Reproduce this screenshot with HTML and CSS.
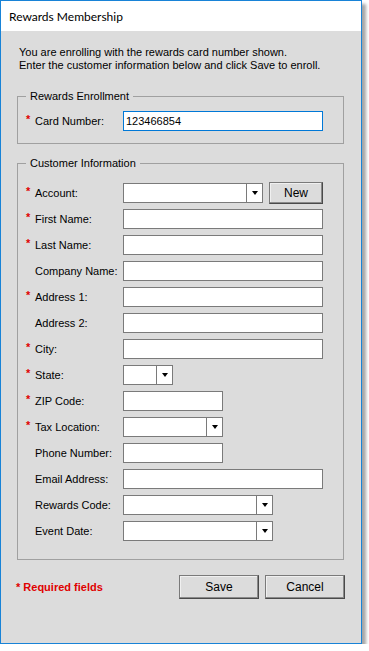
FILE: index.html
```html
<!DOCTYPE html>
<html lang="en">
<head>
  <meta charset="UTF-8">
  <title>Rewards Membership</title>
  <link rel="stylesheet" href="styles.css">
</head>
<body>

<div class="window">
  <div class="titlebar">Rewards Membership</div>
  <div class="content">
    <p class="intro">You are enrolling with the rewards card number shown.<br>Enter the customer information below and click Save to enroll.</p>

    <fieldset class="group group-card">
      <legend>Rewards Enrollment</legend>
      <div class="row">
        <span class="req">*</span><span class="label">Card Number:</span>
        <div class="field w200 focused">123466854</div>
      </div>
    </fieldset>

    <fieldset class="group group-customer">
      <legend>Customer Information</legend>
      <div class="row">
        <span class="req">*</span><span class="label">Account:</span>
        <div class="combo w140"><div class="combo-text"></div><div class="combo-btn"><i class="arrow"></i></div></div>
        <button class="btn btn-new">New</button>
      </div>
      <div class="row">
        <span class="req">*</span><span class="label">First Name:</span>
        <div class="field w200"></div>
      </div>
      <div class="row">
        <span class="req">*</span><span class="label">Last Name:</span>
        <div class="field w200"></div>
      </div>
      <div class="row">
        <span class="req"></span><span class="label">Company Name:</span>
        <div class="field w200"></div>
      </div>
      <div class="row">
        <span class="req">*</span><span class="label">Address 1:</span>
        <div class="field w200"></div>
      </div>
      <div class="row">
        <span class="req"></span><span class="label">Address 2:</span>
        <div class="field w200"></div>
      </div>
      <div class="row">
        <span class="req">*</span><span class="label">City:</span>
        <div class="field w200"></div>
      </div>
      <div class="row">
        <span class="req">*</span><span class="label">State:</span>
        <div class="combo w50"><div class="combo-text"></div><div class="combo-btn"><i class="arrow"></i></div></div>
      </div>
      <div class="row">
        <span class="req">*</span><span class="label">ZIP Code:</span>
        <div class="field w100"></div>
      </div>
      <div class="row">
        <span class="req">*</span><span class="label">Tax Location:</span>
        <div class="combo w100"><div class="combo-text"></div><div class="combo-btn"><i class="arrow"></i></div></div>
      </div>
      <div class="row">
        <span class="req"></span><span class="label">Phone Number:</span>
        <div class="field w100"></div>
      </div>
      <div class="row">
        <span class="req"></span><span class="label">Email Address:</span>
        <div class="field w200"></div>
      </div>
      <div class="row">
        <span class="req"></span><span class="label">Rewards Code:</span>
        <div class="combo w150"><div class="combo-text"></div><div class="combo-btn"><i class="arrow"></i></div></div>
      </div>
      <div class="row">
        <span class="req"></span><span class="label">Event Date:</span>
        <div class="combo w150"><div class="combo-text"></div><div class="combo-btn"><i class="arrow"></i></div></div>
      </div>
    </fieldset>

    <div class="footer">
      <span class="required-note">* Required fields</span>
      <button class="btn btn-footer">Save</button>
      <button class="btn btn-footer">Cancel</button>
    </div>
  </div>
</div>

</body>
</html>
```

FILE: styles.css
```css
body {
  margin: 0;
  background: #fff;
  font-family: "Liberation Sans", Arial, sans-serif;
  font-size: 11px;
  color: #000;
}
.window {
  width: 362px;
  height: 644px;
  box-sizing: border-box;
  border: 1px solid #1883d7;
  display: flex;
  flex-direction: column;
  box-shadow: 4px 4px 3px rgba(0, 0, 0, 0.35);
}
.titlebar {
  height: 30px;
  line-height: 31px;
  padding-left: 8px;
  background: #fff;
  font-family: Lato, "Noto Sans", sans-serif;
  font-size: 12px;
  color: #000;
}
.content {
  flex: 1;
  background: #dcdcdc;
  overflow: hidden;
}
.intro {
  margin: 15px 0 0 18px;
  line-height: 13px;
}
.group {
  box-sizing: border-box;
  width: 327px;
  margin: 0 0 0 16px;
  padding: 0;
  border: 1px solid #a0a0a0;
}
.group legend {
  margin-left: 8px;
  padding: 0 4px;
  line-height: 13px;
}
.group-card {
  margin-top: 18px;
  padding: 8px 0 12px;
}
.group-customer {
  margin-top: 13px;
  padding: 13px 0 18px;
  display: flex;
  flex-direction: column;
  gap: 6px;
}
.row {
  display: flex;
  align-items: center;
  height: 20px;
  padding-left: 8px;
}
.req {
  width: 9px;
  color: #e00000;
  font-weight: bold;
  align-self: flex-start;
  margin-top: 2px;
}
.label {
  width: 88px;
  white-space: nowrap;
}
.field, .combo {
  box-sizing: border-box;
  height: 20px;
  border: 1px solid #7a7a7a;
  background: #fff;
}
.field {
  padding-left: 2px;
  line-height: 18px;
}
.focused {
  border-color: #0078d7;
}
.combo {
  display: flex;
}
.combo-text {
  flex: 1;
}
.combo-btn {
  width: 15px;
  border-left: 1px solid #7a7a7a;
  display: flex;
  align-items: center;
  justify-content: center;
}
.arrow {
  width: 0;
  height: 0;
  border-top: 4px solid #000;
  border-left: 3.5px solid transparent;
  border-right: 3.5px solid transparent;
}
.w50 { width: 50px; }
.w100 { width: 100px; }
.w140 { width: 140px; }
.w150 { width: 150px; }
.w200 { width: 200px; }
.btn {
  box-sizing: border-box;
  background: #dcdcdc;
  border: 1px solid #7a7a7a;
  border-right-color: #4a4a4a;
  border-bottom-color: #4a4a4a;
  box-shadow: inset -1px -1px 0 #8a8a8a, inset 1px 1px 0 #f0f0f0;
  font-family: "Liberation Sans", Arial, sans-serif;
  font-size: 12px;
  color: #000;
  padding: 0;
}
.btn-new {
  width: 54px;
  height: 22px;
  margin-left: 6px;
}
.footer {
  display: flex;
  align-items: center;
  gap: 6px;
  margin-top: 15px;
  padding: 0 16px 0 15px;
}
.required-note {
  flex: 1;
  color: #e00000;
  font-weight: bold;
  font-size: 11px;
}
.btn-footer {
  width: 80px;
  height: 24px;
}
```
